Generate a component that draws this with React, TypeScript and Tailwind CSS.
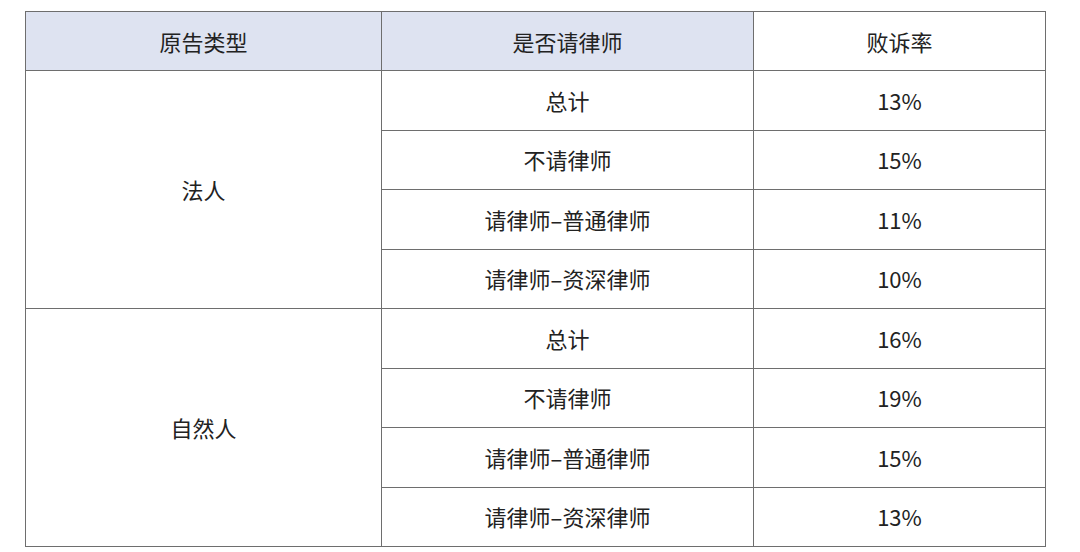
const groups = [
  {
    type: '法人',
    rows: [
      ['总计', '13%'],
      ['不请律师', '15%'],
      ['请律师–普通律师', '11%'],
      ['请律师–资深律师', '10%'],
    ],
  },
  {
    type: '自然人',
    rows: [
      ['总计', '16%'],
      ['不请律师', '19%'],
      ['请律师–普通律师', '15%'],
      ['请律师–资深律师', '13%'],
    ],
  },
];

const cell = 'border-[1.5px] border-[#6e6e6e] text-center align-middle p-0';

export default function App() {
  return (
    <div
      className="w-[1080px] h-[552px] bg-white pt-[11px] pl-[25px] text-[#222] text-[22px]"
      style={{ fontFamily: '"Noto Sans CJK SC", "Noto Sans", sans-serif' }}
    >
      <table className="border-collapse w-[1020px] table-fixed">
        <colgroup>
          <col className="w-[356px]" />
          <col className="w-[372px]" />
          <col className="w-[292px]" />
        </colgroup>
        <thead>
          <tr className="h-[59px]">
            <th className={`${cell} font-normal bg-[#dee3f1]`}>原告类型</th>
            <th className={`${cell} font-normal bg-[#dee3f1]`}>是否请律师</th>
            <th className={`${cell} font-normal bg-white`}>败诉率</th>
          </tr>
        </thead>
        <tbody>
          {groups.map((g) =>
            g.rows.map(([label, rate], i) => (
              <tr key={g.type + i} className="h-[59.5px]">
                {i === 0 && (
                  <td rowSpan={4} className={cell}>
                    {g.type}
                  </td>
                )}
                <td className={cell}>{label}</td>
                <td className={cell}>{rate}</td>
              </tr>
            ))
          )}
        </tbody>
      </table>
    </div>
  );
}
